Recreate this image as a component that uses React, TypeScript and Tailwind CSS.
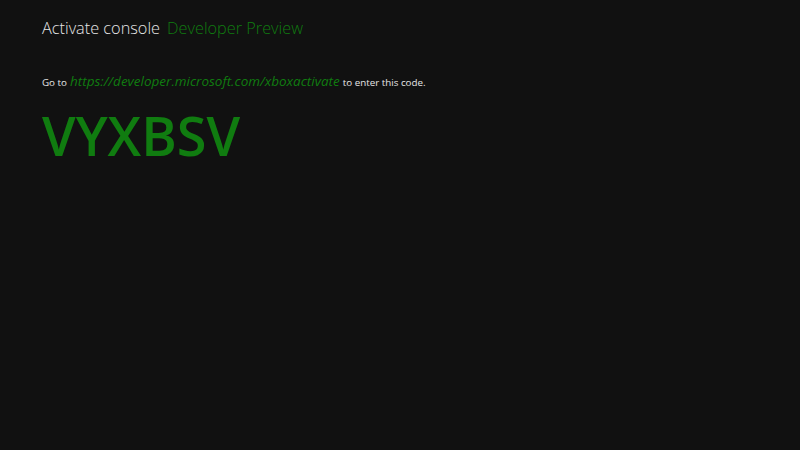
export default function App() {
  return (
    <div className="w-[800px] h-[450px] bg-[#111111] overflow-hidden font-['Open_Sans',sans-serif]">
      <div className="pl-[42px] pt-[16px]">
        <h1 className="flex items-baseline gap-[7px] text-[16.3px] font-light leading-[24px]">
          <span className="text-[#e6e6e6]">Activate console</span>
          <span className="text-[#107c10]">Developer Preview</span>
        </h1>
        <p className="mt-[33px] flex items-baseline gap-[3px] text-[9.8px] leading-[16px] text-[#e6e6e6]">
          <span>Go to</span>
          <span className="text-[13.5px] italic text-[#107c10]">https://developer.microsoft.com/xboxactivate</span>
          <span>to enter this code.</span>
        </p>
        <div className="mt-[14px] text-[54px] font-semibold leading-[60px] text-[#107c10]">VYXBSV</div>
      </div>
    </div>
  );
}
